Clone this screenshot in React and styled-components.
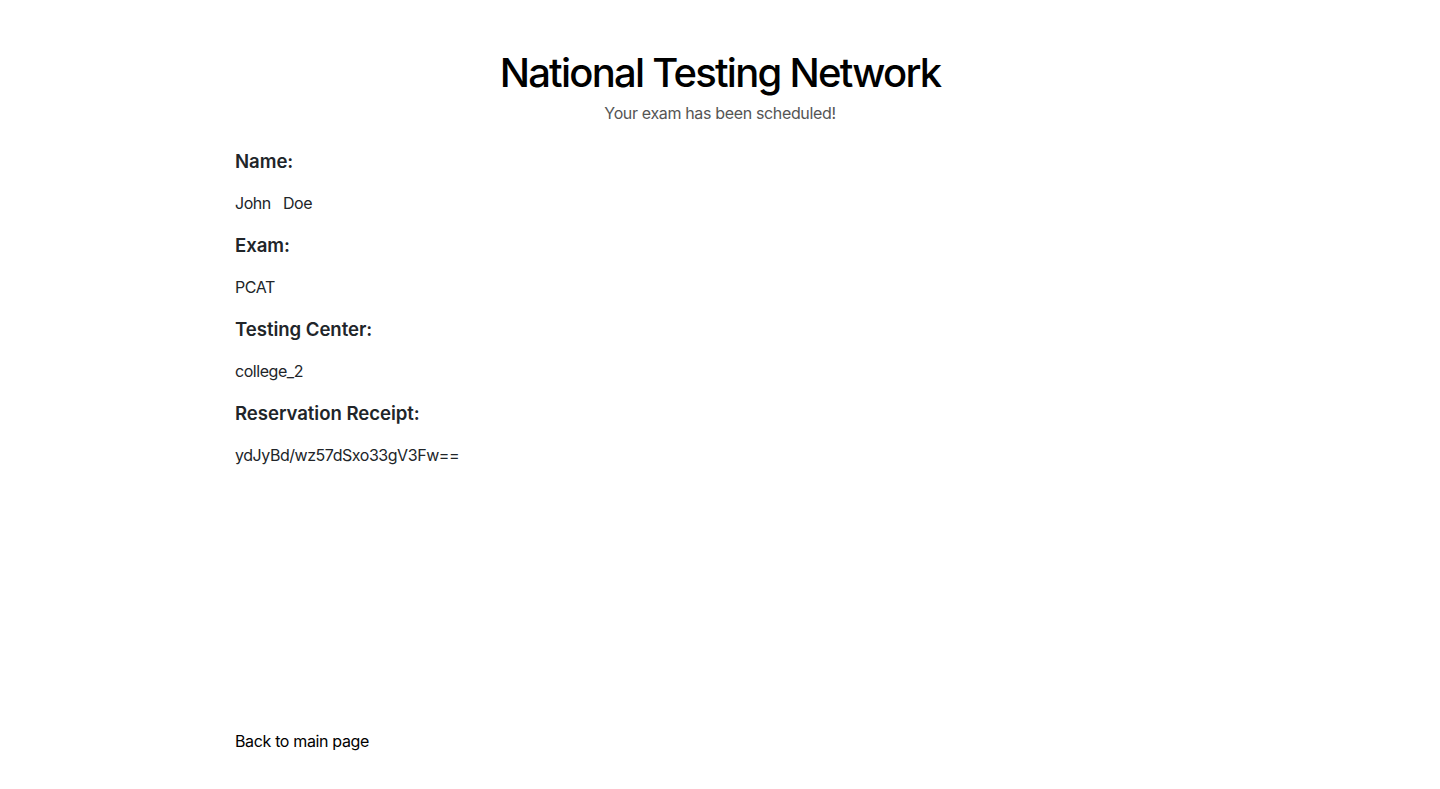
import React from "react";
import styled, { createGlobalStyle } from "styled-components";

const GlobalStyle = createGlobalStyle`
  body {
    margin: 0;
    background: #fff;
    font-family: Inter, "Noto Sans", "Liberation Sans", sans-serif;
    color: #212529;
  }
`;

const Page = styled.div`
  width: 970px;
  margin: 0 auto;
  padding-top: 49px;
`;

const Header = styled.header`
  display: flex;
  flex-direction: column;
  align-items: center;
`;

const Title = styled.h1`
  margin: 0;
  font-size: 40px;
  font-weight: 500;
  line-height: 48px;
  color: #000;
  letter-spacing: -1.75px;
`;

const Subtitle = styled.p`
  margin: 4px 0 0;
  font-size: 16px;
  line-height: 24px;
  color: #555;
  letter-spacing: -0.35px;
`;

const Details = styled.dl`
  margin: 24px 0 0;
  display: flex;
  flex-direction: column;
`;

const Label = styled.dt`
  font-size: 18.6px;
  font-weight: 600;
  line-height: 24px;
  margin-bottom: 18px;
  letter-spacing: -0.05px;
`;

const Value = styled.dd`
  margin: 0 0 18px;
  font-size: 16px;
  line-height: 24px;
  letter-spacing: -0.45px;
`;

const BackLink = styled.a`
  display: block;
  margin-top: 244px;
  font-size: 16px;
  line-height: 24px;
  color: #000;
  text-decoration: none;
  letter-spacing: -0.35px;
`;

const rows = [
  { label: "Name:", value: "John \u00a0 Doe" },
  { label: "Exam:", value: "PCAT" },
  { label: "Testing Center:", value: "college_2" },
  { label: "Reservation Receipt:", value: "ydJyBd/wz57dSxo33gV3Fw==" },
];

const App = () => (
  <>
    <GlobalStyle />
    <Page>
      <Header>
        <Title>National Testing Network</Title>
        <Subtitle>Your exam has been scheduled!</Subtitle>
      </Header>
      <Details>
        {rows.map((row) => (
          <React.Fragment key={row.label}>
            <Label>{row.label}</Label>
            <Value>{row.value}</Value>
          </React.Fragment>
        ))}
      </Details>
      <BackLink href="#">Back to main page</BackLink>
    </Page>
  </>
);

export default App;
